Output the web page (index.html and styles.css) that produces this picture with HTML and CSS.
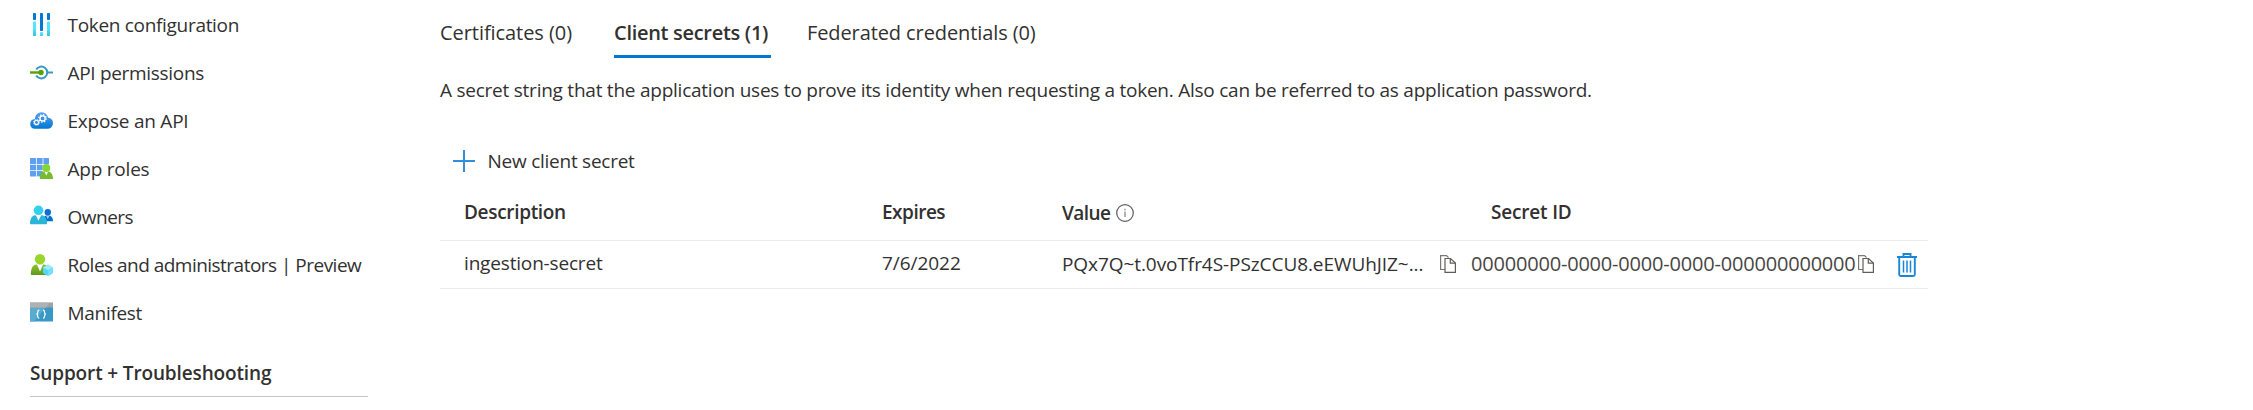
FILE: index.html
```html
<!DOCTYPE html>
<html lang="en">
<head>
<meta charset="utf-8">
<title>Certificates &amp; secrets</title>
<link rel="stylesheet" href="styles.css">
</head>
<body>
<div class="page">
  <nav class="sidebar">
    <a class="nav-item"><svg class="nav-icon" viewBox="0 0 23 23"><defs><linearGradient id="cy" x1="0" y1="0" x2="0" y2="1"><stop offset="0" stop-color="#50e6ff"/><stop offset=".5" stop-color="#50e6ff"/><stop offset="1" stop-color="#32bedd"/></linearGradient></defs><g fill="#0078d4"><rect x="3" y="0" width="3" height="7" rx=".7"/><rect x="10" y="0" width="3" height="18" rx=".7"/><rect x="17" y="0" width="3" height="7" rx=".7"/></g><g fill="url(#cy)"><rect x="3" y="8.5" width="3" height="14.5" rx=".7"/><rect x="10" y="19" width="3" height="4" rx=".7"/><rect x="17" y="8.5" width="3" height="14.5" rx=".7"/></g></svg><span class="label t-token">Token configuration</span></a>
    <a class="nav-item"><svg class="nav-icon" viewBox="0 0 23 23"><g fill="none" stroke="#3999c6" stroke-width="2"><path d="M6.2 8.6A5.9 5.9 0 1 1 6.2 14.4"/><path d="M17 11.5H23"/></g><path d="M0 11.5H9" stroke="#57a300" stroke-width="2.4"/><circle cx="11" cy="11.5" r="2.7" fill="#57a300"/></svg><span class="label t-perm">API permissions</span></a>
    <a class="nav-item"><svg class="nav-icon" viewBox="0 0 23 23"><defs><linearGradient id="cl" x1="0" y1="0" x2="0" y2="1"><stop offset="0" stop-color="#5ea0ef"/><stop offset="1" stop-color="#0078d4"/></linearGradient></defs><path d="M5 19.8A5 5 0 0 1 .2 15 5 5 0 0 1 4.8 10 6.8 6.8 0 0 1 11.5 3.2a6.9 6.9 0 0 1 6.6 5.6A5.6 5.6 0 0 1 23 14.3a5.6 5.6 0 0 1-5.5 5.5z" fill="url(#cl)"/><g fill="none" stroke="#fff"><circle cx="6.5" cy="13.4" r="2" stroke-width="1.1"/><circle cx="6.5" cy="13.4" r="3" stroke-width="1" stroke-dasharray="1 1.356"/><circle cx="12.6" cy="9.4" r="2.6" stroke-width="1.4"/><circle cx="12.6" cy="9.4" r="3.8" stroke-width="1.2" stroke-dasharray="1.3 1.685"/></g></svg><span class="label t-expose">Expose an API</span></a>
    <a class="nav-item"><svg class="nav-icon" viewBox="0 0 23 23"><g fill="#5d9ff0"><rect x="0" y="1" width="6" height="6" rx=".6"/><rect x="6.8" y="1" width="5.8" height="6"/><rect x="13.4" y="1" width="5.6" height="6" rx=".6"/><rect x="0" y="7.8" width="6" height="5.2"/><rect x="6.8" y="7.8" width="5.8" height="5.2"/><rect x="13.4" y="7.8" width="5.6" height="5.2"/><rect x="0" y="13.8" width="6" height="5.6" rx=".6"/><rect x="6.8" y="13.8" width="5.8" height="5.6"/></g><path d="M9.8 21.5C9.8 17 11.5 14.6 14 14.4h4c2.7.2 5 2.6 5 7.1 0 .4-.3.5-.6.5H10.4c-.3 0-.6-.1-.6-.5z" fill="#76bc2d"/><path d="M14.2 14.3h4.200l-2.100 4.200z" fill="#fff"/><circle cx="16.300" cy="11" r="4" fill="#86d633"/></svg><span class="label t-app">App roles</span></a>
    <a class="nav-item"><svg class="nav-icon" viewBox="0 0 23 23"><path d="M13 16.3c.3-4 1.700-5.600 3.300-5.800h3c2 .2 3.700 2.500 3.700 5.200 0 .4-.3.600-.6.600z" fill="#0072ce"/><path d="M16 10.400h3.600l-1.800 3.600z" fill="#9bd3f5"/><circle cx="17.800" cy="7.200" r="3.200" fill="#0a6fd0"/><path d="M0 18.500C0 13.500 2 10.800 5 10.200h7c3 .6 5 3.300 5 8.300 0 .4-.3.700-.8.700H.8c-.500 0-.8-.3-.8-.7z" fill="#29b4d8"/><path d="M5.600 9.800h5.800l-2.900 6z" fill="#fff"/><circle cx="8.500" cy="5.300" r="4.800" fill="#32d0ef"/></svg><span class="label t-owner">Owners</span></a>
    <a class="nav-item"><svg class="nav-icon" viewBox="0 0 23 23"><defs><linearGradient id="gr" x1="0" y1="0" x2="0" y2="1"><stop offset="0" stop-color="#8fc52c"/><stop offset="1" stop-color="#5e9624"/></linearGradient></defs><path d="M.8 21.200C.8 15.500 3 12 6 11.600h8c3 .4 5 3.900 5 9.600 0 .500-.3.800-.8.800H1.600c-.500 0-.8-.3-.8-.8z" fill="url(#gr)"/><path d="M6.800 11h6.500L10 18.500z" fill="#fff"/><circle cx="10" cy="6.200" r="5.200" fill="#9ad52f"/><path d="M18 11.600l5 2.800v5.600l-5 2.900-5-2.900v-5.600z" fill="#50d8f5"/><path d="M18 11.600l5 2.800-5 2.900-5-2.900z" fill="#9cebff"/><path d="M18 17.300l5-2.900v5.600l-5 2.900z" fill="#74dff8"/></svg><span class="label t-roles">Roles and administrators | Preview</span></a>
    <a class="nav-item"><svg class="nav-icon" viewBox="0 0 23 23"><path d="M0 6h23v14.500H0z" fill="#3999c6"/><path d="M0 6h16L4 20.500H0z" fill="#5aabd0"/><path d="M0 1.500h23V6.500H0z" fill="#a0a1a2"/><path d="M0 1.500h20L16 6.500H0z" fill="#b0b1b2"/><g fill="none" stroke="#fff" stroke-width="1.200"><path d="M9.300 9.200c-1.500 0-1.500.7-1.500 1.800 0 1.200 0 2-1.300 2.200 1.300.2 1.300 1 1.300 2.200 0 1.100 0 1.800 1.500 1.800M13 9.200c1.500 0 1.500.7 1.500 1.800 0 1.200 0 2 1.300 2.200-1.300.2-1.300 1-1.300 2.200 0 1.100 0 1.800-1.500 1.800"/></g></svg><span class="label t-manifest">Manifest</span></a>
    <h2 class="section"><span class="t-support">Support + Troubleshooting</span></h2>
  </nav>
  <main class="main">
    <div class="tabs">
      <a class="tab first"><span class="t-cert">Certificates (0)</span></a>
      <a class="tab active"><span class="t-client">Client secrets (1)</span></a>
      <a class="tab"><span class="t-fed">Federated credentials (0)</span></a>
    </div>
    <p class="intro"><span class="t-intro">A secret string that the application uses to prove its identity when requesting a token. Also can be referred to as application password.</span></p>
    <div class="command"><svg class="plus" viewBox="0 0 24 24"><path d="M1 12H23M12 1V23" stroke="#2f8fdc" stroke-width="2"/></svg><span class="t-new">New client secret</span></div>
    <div class="row head">
      <div class="cell"><span class="t-desc">Description</span></div>
      <div class="cell"><span class="t-exp">Expires</span></div>
      <div class="cell value-head"><span class="t-value">Value</span><svg class="info" viewBox="0 0 18 18"><circle cx="9" cy="9" r="8.300" fill="none" stroke="#605e5c" stroke-width="1.200"/><path d="M9 7.500V13M9 4.800V6.200" stroke="#8a8886" stroke-width="1.300"/></svg></div>
      <div class="cell id-head"><span class="t-sid">Secret ID</span></div>
    </div>
    <div class="row">
      <div class="cell upper"><span class="t-ing">ingestion-secret</span></div>
      <div class="cell upper"><span class="t-date">7/6/2022</span></div>
      <div class="cell lower split"><span class="t-pq">PQx7Q~t.0voTfr4S-PSzCCU8.eEWUhJIZ~...</span><svg class="copy" viewBox="0 0 16 18"><path d="M5 14.500H.6V.6H6.500L8.500 2.500" fill="none" stroke="#797775" stroke-width="1.200"/><path d="M5 3.500h5.500l4.900 4.500v9.400H5z" fill="#fff" stroke="#605e5c" stroke-width="1.200"/><path d="M10.300 3.500V8.200h5.100" fill="none" stroke="#605e5c" stroke-width="1.200"/></svg></div>
      <div class="cell lower id"><span class="t-zero">00000000-0000-0000-0000-000000000000</span><svg class="copy" viewBox="0 0 16 18"><path d="M5 14.500H.6V.6H6.500L8.500 2.500" fill="none" stroke="#797775" stroke-width="1.200"/><path d="M5 3.500h5.500l4.900 4.500v9.400H5z" fill="#fff" stroke="#605e5c" stroke-width="1.200"/><path d="M10.300 3.500V8.200h5.100" fill="none" stroke="#605e5c" stroke-width="1.200"/></svg></div>
      <div class="cell"><svg class="trash" viewBox="0 0 20 24"><g fill="none" stroke="#1a86d9" stroke-width="1.900"><path d="M0 4H20M6.500 4V1H13.500V4M2.200 4V21.500q0 1.500 1.500 1.500h12.600q1.500 0 1.500-1.500V4"/><path d="M6.500 7.500V19.500M10 7.500V19.500M13.500 7.500V19.500" stroke-width="1.500"/></g></svg></div>
    </div>
  </main>
</div>
</body>
</html>
```
FILE: styles.css
```css
* { box-sizing: border-box; }
body { margin: 0; background: #fff; color: #323130; font: 19px/24px "Open Sans", "Noto Sans", sans-serif; }
.page { display: flex; width: 2253px; height: 410px; overflow: hidden; }
.sidebar { width: 368px; margin-right: 72px; padding-left: 30px; flex: none; }
.nav-item { display: flex; align-items: center; height: 48px; gap: 14.500px; white-space: nowrap; }
.nav-icon { width: 23px; height: 23px; flex: none; }
.label { padding-top: 2px; }
.section { margin: 0; height: 61px; padding-top: 25px; border-bottom: 1px solid #c8c6c4; font-size: 19px; font-weight: 600; white-space: nowrap; }
.main { width: 1488px; white-space: nowrap; }
.tabs { display: flex; height: 58px; gap: 36px; font-size: 20px; }
.tab { height: 58px; padding-top: 21px; }
.first { width: 138px; }
.active { width: 157px; font-weight: 600; border-bottom: 3px solid #0078d4; }
.intro { margin: 0; padding-top: 20px; height: 87px; }
.command { display: flex; align-items: center; gap: 11.500px; height: 33px; padding: 0 0 2px 12px; }
.plus { width: 24px; height: 24px; }
.row { display: grid; grid-template-columns: 418px 180px 409px 425px 32px; padding-left: 24px; height: 48px; align-items: center; border-bottom: 1px solid #edebe9; }
.head { font-weight: 600; height: 63px; padding-top: 6px; }
.cell { display: flex; align-items: center; }
.value-head { padding-top: 1px; }
.info { width: 18px; height: 18px; margin-left: 6px; }
.copy { width: 16px; height: 18px; flex: none; }
.upper { padding-bottom: 3px; }
.lower { padding-bottom: 1px; }
.split { justify-content: space-between; padding-right: 15px; }
.id-head { padding-left: 20px; }
.id { color: #484644; gap: 2px; }
.trash { width: 20px; height: 24px; margin-left: 1px; }

/* Tracking per label */
.t-token, .t-perm { letter-spacing: -.31px; }
.t-expose { letter-spacing: -.25px; }
.t-app { letter-spacing: -.22px; }
.t-owner { letter-spacing: -.5px; }
.t-roles { letter-spacing: -.52px; }
.t-manifest { letter-spacing: -.3px; }
.t-support { letter-spacing: -.14px; }
.t-cert { letter-spacing: -.06px; }
.t-client { letter-spacing: -.3px; }
.t-fed { letter-spacing: -.1px; }
.t-intro { letter-spacing: -.24px; }
.t-new { letter-spacing: -.25px; }
.t-desc { letter-spacing: -.32px; }
.t-exp { letter-spacing: -.5px; }
.t-value { letter-spacing: -.54px; }
.t-sid { letter-spacing: -.18px; }
.t-ing { letter-spacing: -.17px; }
.t-date { letter-spacing: -.05px; }
.t-pq { letter-spacing: -.07px; }
.t-zero { font-size: 20px; letter-spacing: -.197px; }
```
